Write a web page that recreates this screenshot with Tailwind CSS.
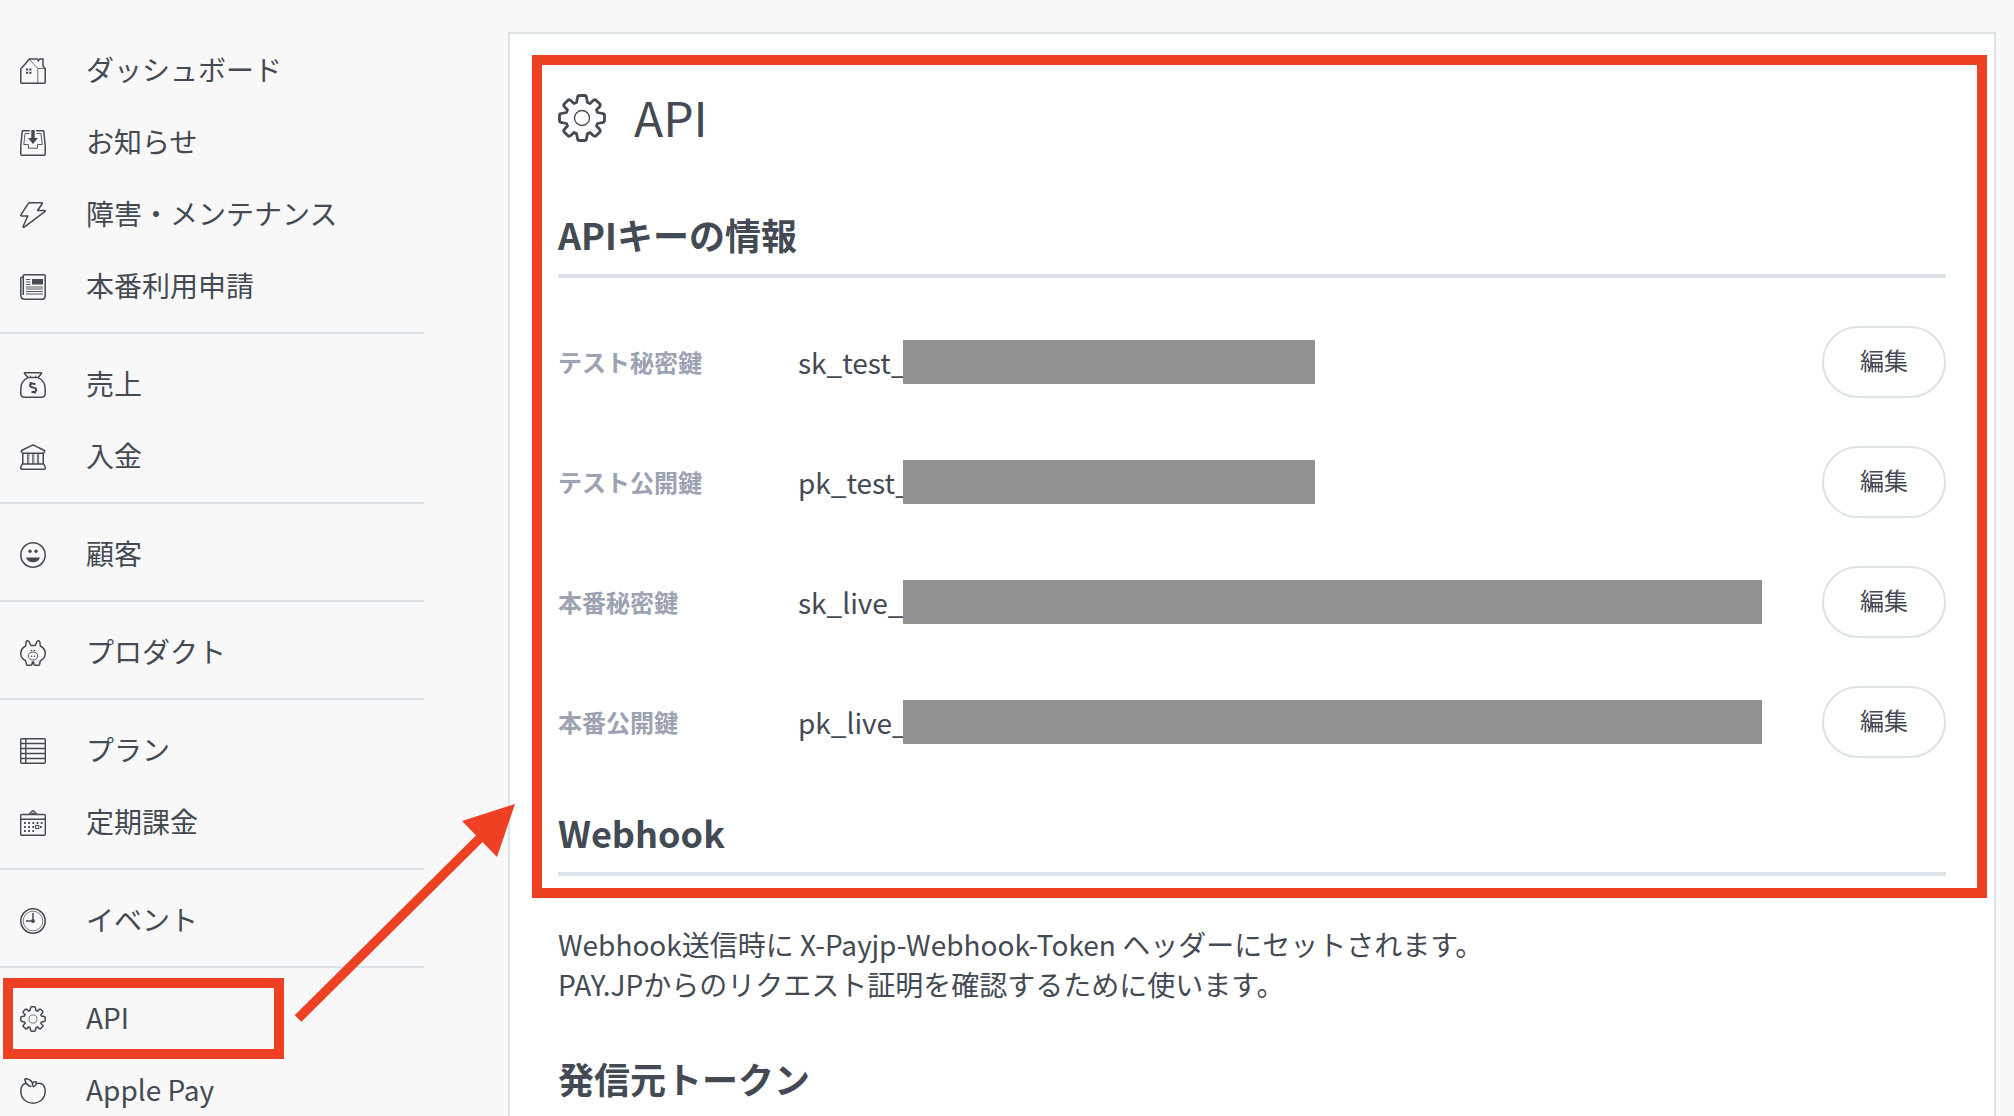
<!DOCTYPE html>
<html lang="ja">
<head>
    <meta charset="UTF-8">
    <meta name="viewport" content="width=device-width, initial-scale=1.0">
    <title>API - PAY.JP</title>
    <script src="https://cdn.jsdelivr.net/npm/@tailwindcss/browser@4"></script>
</head>
<body class="h-screen overflow-hidden bg-[#f8f8f8] font-['Noto_Sans_CJK_JP',sans-serif] text-[28px] leading-10 text-[#434a54]">
    <svg class="hidden">
        <symbol id="gear" viewBox="0 0 48 48">
            <path d="M18.500 8.500L19.500 3.500Q19.800 1.500 21.500 1.500H26.500Q28.200 1.500 28.500 3.500L29.500 8.500L32 9.500L35.500 6.300Q37 5.200 38.300 6.500L41.600 9.800Q42.800 11 41.800 12.500L38.500 16L39.500 18.500L44.500 19.500Q46.500 19.800 46.500 21.500V26.500Q46.500 28.200 44.500 28.500L39.500 29.500L38.500 32L41.800 35.500Q42.800 37 41.600 38.200L38.300 41.500Q37 42.800 35.500 41.700L32 38.500L29.500 39.500L28.500 44.500Q28.200 46.500 26.500 46.500H21.500Q19.800 46.500 19.500 44.500L18.500 39.500L16 38.500L12.500 41.700Q11 42.800 9.700 41.500L6.400 38.200Q5.200 37 6.200 35.500L9.500 32L8.500 29.500L3.500 28.500Q1.500 28.200 1.500 26.500V21.500Q1.500 19.800 3.500 19.500L8.500 18.500L9.500 16L6.200 12.500Q5.200 11 6.400 9.800L9.700 6.500Q11 5.200 12.500 6.300L16 9.500Z" fill="none" stroke="currentColor" stroke-width="2.800" stroke-linejoin="round"/>
            <circle cx="24" cy="24" r="7.500" fill="none" stroke="currentColor" stroke-width="1.300"/>
        </symbol>
    </svg>

    <div class="relative flex">
        <nav class="w-[424px] shrink-0 pt-[35px]">
            <ul class="mb-[15px] border-b-2 border-[#dbe3e8] pb-[9px]">
                <li>
                    <a href="#" class="flex h-[72px] items-center gap-10 pl-5">
                        <svg class="size-[26px]" viewBox="0 0 26 26" fill="none" stroke="currentColor" stroke-width="1.500" stroke-linejoin="round">
                            <path d="M.8 24.200V11L9.500 1H17.500L18.500 3L19.500 1H23V8L25.200 10.500V24.200Q25.200 25.200 24.200 25.200H1.800Q.8 25.200 .8 24.200Z"/>
                            <path d="M9.500 1.500L17.800 10.500V25M17.800 10.500H25" stroke-width=".8"/>
                            <path d="M6 10.500H8.200V12.500H6ZM9.300 10.500H11.500V12.500H9.300ZM6 13.800H8.200V15.800H6ZM9.300 13.800H11.500V15.800H9.300Z" fill="currentColor" stroke="none"/>
                        </svg>
                        <span class="pb-1">ダッシュボード</span>
                    </a>
                </li>
                <li>
                    <a href="#" class="flex h-[72px] items-center gap-10 pl-5">
                        <svg class="size-[26px]" viewBox="0 0 26 26" fill="none" stroke="currentColor" stroke-width="1.500" stroke-linejoin="round">
                            <path d="M9.800 .8H3Q2.300 .8 2.200 1.500L.8 16V24Q.8 25.200 2 25.200H24Q25.200 25.200 25.200 24V16L23.800 1.500Q23.700 .8 23 .8H16.200"/>
                            <path d="M9.500 3.500H5L3.800 14.500H8.500V18.200H17.500V14.500H22.200L21 3.500H16.500" stroke-width=".9"/>
                            <path d="M11.300 0H14.700V8H18L13 14L8 8H11.300Z" fill="currentColor" stroke="none"/>
                        </svg>
                        <span class="pb-1">お知らせ</span>
                    </a>
                </li>
                <li>
                    <a href="#" class="flex h-[72px] items-center gap-10 pl-5">
                        <svg class="size-[26px]" viewBox="0 0 26 26" fill="none" stroke="currentColor" stroke-width="1.500" stroke-linejoin="round">
                            <path d="M9.500 .8H21.500Q22.800 .8 22.200 1.800L17.500 8.500H24.600Q25.800 8.700 24.800 9.700L4.500 24.900Q2.700 26 3.200 24.200L7.800 14H1.500Q.4 13.800 1 12.700L8 1.800Q8.600 .8 9.500 .8Z"/>
                        </svg>
                        <span class="pb-1">障害・メンテナンス</span>
                    </a>
                </li>
                <li>
                    <a href="#" class="flex h-[72px] items-center gap-10 pl-5">
                        <svg class="size-[26px]" viewBox="0 0 26 26" fill="none" stroke="currentColor" stroke-width="1.500" stroke-linejoin="round">
                            <path d="M3.300 3V1.800Q3.300 .8 4.300 .8H24.200Q25.200 .8 25.200 1.800V22Q25.200 25.200 22 25.200H5Q.8 25.200 .8 21V4.500Q.8 3.200 2 3.200H3.300V21"/>
                            <path d="M6 5.500H10.500M6 8H10.500M6 10.500H10.500M6 13H23M6 15H23M6 17.500H23M6 20H23" stroke-width=".9"/>
                            <path d="M12 5H23V10.500H12Z" fill="currentColor" stroke="none"/>
                        </svg>
                        <span class="pb-1">本番利用申請</span>
                    </a>
                </li>
            </ul>
            <ul class="mb-[15px] border-b-2 border-[#dbe3e8] pb-[9px]">
                <li>
                    <a href="#" class="flex h-[72px] items-center gap-10 pl-5">
                        <svg class="size-[26px]" viewBox="0 0 26 26" fill="none" stroke="currentColor" stroke-width="1.500" stroke-linejoin="round">
                            <path d="M8 5.600L4.500 1.500Q4.200 .7 5 .7H21Q21.800 .7 21.500 1.500L18 5.600Q25.200 9 25.200 17V21.500Q25.200 25.200 21.500 25.200H4.500Q.8 25.200 .8 21.500V17Q.8 9 8 5.600ZM8 5.600H18"/>
                            <path d="M10 3.500L11 5.500M16 3.500L15 5.500" stroke-width=".9"/>
                            <path d="M10.800 10V12M15 19.500V21.500M15.500 12.200Q10.500 10.800 10 12.800Q9.800 14.800 13 15.500Q16.800 16.200 16.200 18.300Q15.500 20.500 11.500 20" stroke-width="2"/>
                        </svg>
                        <span class="pb-1">売上</span>
                    </a>
                </li>
                <li>
                    <a href="#" class="flex h-[72px] items-center gap-10 pl-5">
                        <svg class="size-[26px]" viewBox="0 0 26 26" fill="none" stroke="currentColor" stroke-width="1.500" stroke-linejoin="round">
                            <path d="M13 .8L24.500 6.500Q25 7 24.500 7.700L23.500 9.200H2.500L1.500 7.700Q1 7 1.500 6.500ZM2.800 9.200V20M23.200 9.200V20M2.300 20H23.700L25.200 23V24.500Q25.200 25.200 24.500 25.200H1.500Q.8 25.200 .8 24.500V23Z"/>
                            <path d="M7.500 9.200V20M8.800 9.200V20M12.600 9.200V20M13.800 9.200V20M17.400 9.200V20M18.600 9.200V20" stroke-width=".8"/>
                        </svg>
                        <span class="pb-1">入金</span>
                    </a>
                </li>
            </ul>
            <ul class="mb-[15px] border-b-2 border-[#dbe3e8] pb-[9px]">
                <li>
                    <a href="#" class="flex h-[72px] items-center gap-10 pl-5">
                        <svg class="size-[26px]" viewBox="0 0 26 26" fill="none" stroke="currentColor" stroke-width="1.500">
                            <circle cx="13" cy="13" r="12.200"/>
                            <path d="M6 15.500H20Q18.500 20.200 13 20.200Q7.500 20.200 6 15.500Z" fill="currentColor" stroke="none"/>
                            <circle cx="10" cy="9.300" r="1.700" fill="currentColor" stroke="none"/>
                            <circle cx="16" cy="9.300" r="1.700" fill="currentColor" stroke="none"/>
                        </svg>
                        <span class="pb-1">顧客</span>
                    </a>
                </li>
            </ul>
            <ul class="mb-[15px] border-b-2 border-[#dbe3e8] pb-[9px]">
                <li>
                    <a href="#" class="flex h-[72px] items-center gap-10 pl-5">
                        <svg class="size-[26px]" viewBox="0 0 26 26" fill="none" stroke="currentColor" stroke-width="1.500" stroke-linejoin="round">
                            <path d="M10.800 5.500H15.200L17 1.500Q19 -.2 19.800 2L20.300 6C23.500 7.500 25.200 10 25.200 13.500C25.200 17.500 23 19.500 20.300 20.800L19.500 24.500Q19.300 25.200 18.500 25.200H14.800Q14.200 25.200 14 24.300L13.600 22H12.400L12 24.300Q11.800 25.200 11.200 25.200H7.500Q6.700 25.200 6.500 24.500L5.700 20.800C3 19.500 .8 17.500 .8 13.500C.8 10 2.500 7.500 5.700 6L6.200 2Q7 -.2 9 1.500Z"/>
                            <ellipse cx="13" cy="16" rx="4.800" ry="4" stroke-width=".9"/>
                            <circle cx="11.500" cy="16.200" r=".8" fill="currentColor" stroke="none"/>
                            <circle cx="14.500" cy="16.200" r=".8" fill="currentColor" stroke="none"/>
                            <circle cx="11.500" cy="10.500" r=".8" fill="currentColor" stroke="none"/>
                            <circle cx="14.500" cy="10.500" r=".8" fill="currentColor" stroke="none"/>
                        </svg>
                        <span class="pb-1">プロダクト</span>
                    </a>
                </li>
            </ul>
            <ul class="mb-[15px] border-b-2 border-[#dbe3e8] pb-[9px]">
                <li>
                    <a href="#" class="flex h-[72px] items-center gap-10 pl-5">
                        <svg class="size-[26px]" viewBox="0 0 26 26" fill="none" stroke="currentColor" stroke-width="1.400">
                            <rect x=".7" y=".7" width="24.600" height="24.600" rx="1"/>
                            <path d="M5.800 .7V25.300M.7 5.500H25.300M.7 10.500H25.300M.7 15.500H25.300M.7 20.500H25.300"/>
                        </svg>
                        <span class="pb-1">プラン</span>
                    </a>
                </li>
                <li>
                    <a href="#" class="flex h-[72px] items-center gap-10 pl-5">
                        <svg class="size-[26px]" viewBox="0 0 26 26" fill="none" stroke="currentColor" stroke-width="1.400">
                            <rect x=".7" y="4.500" width="24.600" height="20.800" rx="1"/>
                            <path d="M.7 9.200H25.300M9 4.500L12 1.200Q13 .4 14 1.200L17 4.500M11.500 4.500Q13 1.800 14.500 4.500"/>
                            <path d="M4 13H22.500M4 17H15M20 17H22.500M4 21H14" stroke-dasharray="1.800 2.400" stroke-width="1.800"/>
                            <rect x="15.600" y="15.400" width="3.200" height="3.200" stroke-width="1"/>
                        </svg>
                        <span class="pb-1">定期課金</span>
                    </a>
                </li>
            </ul>
            <ul class="mb-[15px] border-b-2 border-[#dbe3e8] pb-[9px]">
                <li>
                    <a href="#" class="flex h-[72px] items-center gap-10 pl-5">
                        <svg class="size-[26px]" viewBox="0 0 26 26" fill="none" stroke="currentColor" stroke-width="1.500">
                            <circle cx="13" cy="13" r="12.200"/>
                            <circle cx="13" cy="13" r="9.800" stroke-width=".7"/>
                            <path d="M13 5V13H6"/>
                            <circle cx="13" cy="13" r="1.900" fill="currentColor" stroke="none"/>
                        </svg>
                        <span class="pb-1">イベント</span>
                    </a>
                </li>
            </ul>
            <ul>
                <li class="relative">
                    <a href="#" aria-current="page" class="flex h-[72px] items-center gap-10 pl-5">
                        <svg class="size-[26px]"><use href="#gear"/></svg>
                        <span class="pb-1">API</span>
                    </a>
                    <div class="pointer-events-none absolute -top-[5px] left-[3px] h-[81px] w-[281px] border-10 border-[#ee4023]"></div>
                </li>
                <li>
                    <a href="#" class="flex h-[72px] items-center gap-10 pl-5">
                        <svg class="size-[26px]" viewBox="0 0 26 26" fill="none" stroke="currentColor" stroke-width="1.500" stroke-linejoin="round">
                            <path d="M13 7.500Q17 4.200 21 5.500Q25.200 7.500 25.200 13Q25.200 19 21 22.500Q17.500 25.200 13 25.200Q8.500 25.200 5 22.500Q.8 19 .8 13Q.8 7.500 5 5.500Q9 4.200 13 7.500Z"/>
                            <path d="M11.500 8.500Q6 7.500 4.800 1.500Q4.800 .5 6 .7Q11.500 1.500 12.500 5.500Q14 3.300 16.200 4Q17 6.500 14.200 8.500Q12.700 9.500 12.500 5.500" fill="#f8f8f8"/>
                        </svg>
                        <span class="pb-1">Apple Pay</span>
                    </a>
                </li>
            </ul>
        </nav>

        <main class="relative mt-8 mr-[18px] ml-[84px] flex-1 border-2 border-[#dbe3e8] bg-white px-12 pt-11 pb-12">
            <div class="pointer-events-none absolute top-[21px] right-[7px] left-[22px] h-[843px] border-10 border-[#ee4023]"></div>

            <h1 class="flex h-20 items-center gap-7 text-5xl">
                <svg class="size-12"><use href="#gear"/></svg>
                <span class="pb-1">API</span>
            </h1>

            <h2 class="mt-[50px] h-[70px] border-b-4 border-[#dbe3e8] text-4xl leading-[52px] font-bold">APIキーの情報</h2>
            <dl class="mt-12 space-y-12">
                <div class="flex h-[72px] items-center">
                    <dt class="w-60 shrink-0 text-2xl font-bold text-[#9ba2b1]">テスト秘密鍵</dt>
                    <dd class="flex flex-1 items-center"><span class="w-[105px]">sk_test_</span><span class="relative h-11 w-[412px] bg-[#919191]"></span></dd>
                    <button type="button" class="h-[72px] w-[124px] rounded-full border-2 border-[#dbe3e8] pb-1 text-2xl">編集</button>
                </div>
                <div class="flex h-[72px] items-center">
                    <dt class="w-60 shrink-0 text-2xl font-bold text-[#9ba2b1]">テスト公開鍵</dt>
                    <dd class="flex flex-1 items-center"><span class="w-[105px]">pk_test_</span><span class="relative h-11 w-[412px] bg-[#919191]"></span></dd>
                    <button type="button" class="h-[72px] w-[124px] rounded-full border-2 border-[#dbe3e8] pb-1 text-2xl">編集</button>
                </div>
                <div class="flex h-[72px] items-center">
                    <dt class="w-60 shrink-0 text-2xl font-bold text-[#9ba2b1]">本番秘密鍵</dt>
                    <dd class="flex flex-1 items-center"><span class="w-[105px]">sk_live_</span><span class="relative h-11 w-[859px] bg-[#919191]"></span></dd>
                    <button type="button" class="h-[72px] w-[124px] rounded-full border-2 border-[#dbe3e8] pb-1 text-2xl">編集</button>
                </div>
                <div class="flex h-[72px] items-center">
                    <dt class="w-60 shrink-0 text-2xl font-bold text-[#9ba2b1]">本番公開鍵</dt>
                    <dd class="flex flex-1 items-center"><span class="w-[105px]">pk_live_</span><span class="relative h-11 w-[859px] bg-[#919191]"></span></dd>
                    <button type="button" class="h-[72px] w-[124px] rounded-full border-2 border-[#dbe3e8] pb-1 text-2xl">編集</button>
                </div>
            </dl>

            <h2 class="mt-12 h-[70px] border-b-4 border-[#dbe3e8] text-4xl leading-[52px] font-bold">Webhook</h2>
            <p class="mt-12">
                Webhook送信時に X-Payjp-Webhook-Token ヘッダーにセットされます。<br>
                PAY.JPからのリクエスト証明を確認するために使います。
            </p>
            <h2 class="mt-12 text-4xl leading-[52px] font-bold">発信元トークン</h2>
        </main>

        <!-- arrow from the API menu item to the panel -->
        <svg class="pointer-events-none absolute top-[800px] left-[290px] h-[230px] w-[230px]" viewBox="0 0 230 230" fill="#ee4023">
            <path d="M8 218.500L190 38" stroke="#ee4023" stroke-width="9.500"/>
            <path d="M225 4L172 21L207 57Z"/>
        </svg>
    </div>
</body>
</html>
